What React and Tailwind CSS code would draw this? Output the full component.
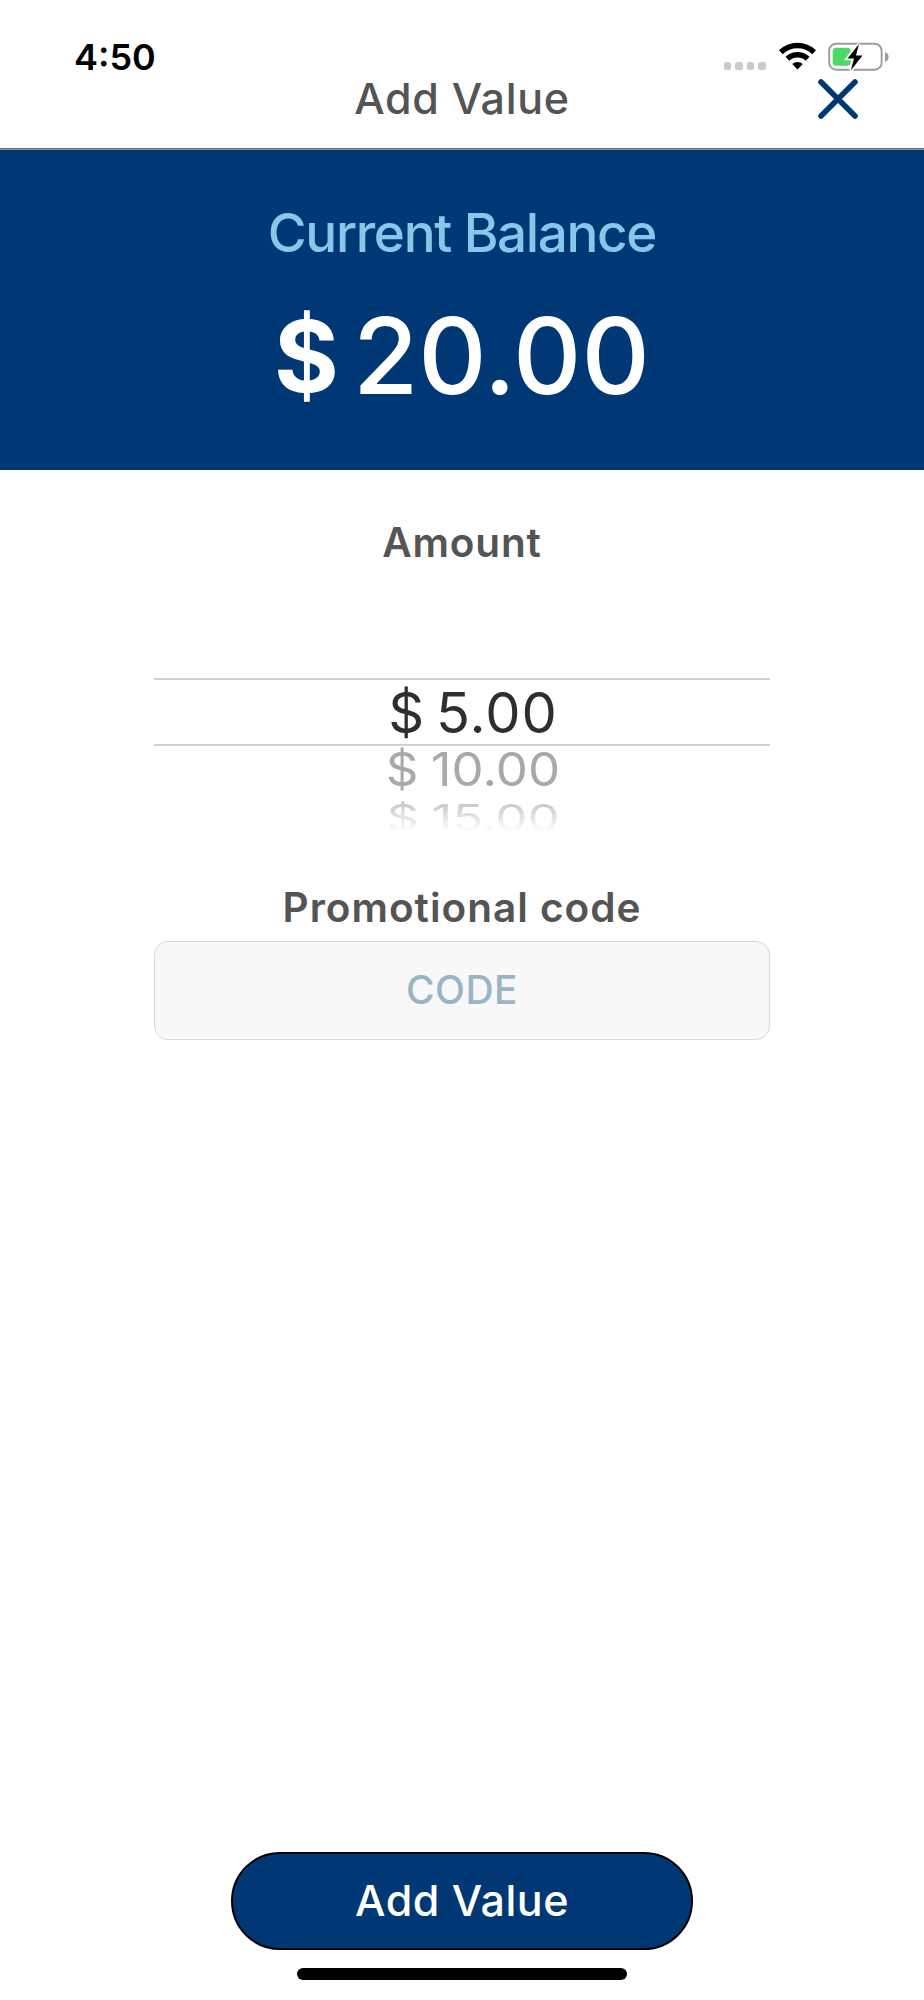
import React, { useState } from "react";

const WifiIcon = () => (
  <svg width="37" height="28" viewBox="0 0 37 28" fill="none" stroke="#000" strokeWidth="5.4">
    <path d="M1.9 10.2a23.8 23.8 0 0 1 33.2 0" />
    <path d="M8.4 16.8a14.5 14.5 0 0 1 20.2 0" />
    <path d="M18.5 27.4l-5.3-5.3a7.7 7.7 0 0 1 10.6 0z" fill="#000" stroke="none" />
  </svg>
);

const BatteryIcon = () => (
  <svg width="61" height="30" viewBox="0 0 61 30">
    <rect x="1.2" y="1.7" width="52.4" height="26" rx="7" fill="none" stroke="#9c9c9c" strokeWidth="1.9" />
    <path d="M57 10v10c2.4-.8 3.6-2.7 3.6-5s-1.2-4.2-3.6-5z" fill="#9c9c9c" />
    <rect x="4.7" y="5.7" width="18" height="18" rx="3.5" fill="#4cd964" />
    <path
      d="M31 2 19.500 16.500h6.500l-3.200 12L34.500 13.500h-6.500z"
      fill="#000"
      stroke="#fff"
      strokeWidth="3.6"
      paintOrder="stroke"
    />
  </svg>
);

const CloseIcon = () => (
  <svg width="40" height="40" viewBox="0 0 40 40" stroke="#003876" strokeWidth="5.6" strokeLinecap="round">
    <path d="M3 3l34 34M37 3L3 37" />
  </svg>
);

const StatusBar = () => (
  <div className="flex h-[77px] pl-[74px] pr-[35px] justify-between">
    <span className="mt-[39px] h-9 text-[36px] leading-9 font-semibold text-black">4:50</span>
    <div className="flex pt-[42px]">
      <div className="flex gap-[4px] mt-5 mr-[13px]">
        {[0, 1, 2, 3].map((dot) => (
          <span key={dot} className="w-[7.6px] h-2 rounded-[2.5px] bg-[#cbcbcb]" />
        ))}
      </div>
      <WifiIcon />
      <div className="ml-[12px]">
        <BatteryIcon />
      </div>
    </div>
  </div>
);

const AddValue = () => {
  const [code, setCode] = useState("");

  return (
    <div className="w-[924px] h-[2000px] bg-white flex flex-col overflow-hidden font-['Inter',sans-serif] text-[#545454]">
      <header className="h-[149px] shrink-0 border-b border-[#6a6a6c]">
        <StatusBar />
        <div className="grid grid-cols-[1fr_auto_1fr] items-center h-[43px] px-[66px]">
          <span />
          <h1 className="text-[43px] leading-[43px] font-[550] tracking-[0.7px]">Add Value</h1>
          <button className="justify-self-end" aria-label="Close">
            <CloseIcon />
          </button>
        </div>
      </header>

      <section className="h-[321px] shrink-0 border-t border-[#8f9499] bg-[#003876] flex flex-col items-center">
        <h2 className="mt-[53px] h-[60px] text-[53px] leading-[60px] font-medium tracking-[-1.35px] text-[#86c8ea]">Current Balance</h2>
        <div className="mt-[38px] h-[110px] flex text-white text-[106px] leading-[110px]">
          <span className="font-bold text-[99px]">$</span>
          <span className="ml-[14px] font-medium">20.00</span>
        </div>
      </section>

      <section className="flex flex-col items-center">
        <h3 className="mt-[53px] h-10 text-[40.5px] leading-10 font-semibold tracking-[0.85px]">Amount</h3>
        <div className="mt-[115px] w-[616px] flex flex-col items-center text-[56px] whitespace-pre">
          <div className="w-full h-[68px] border-y-2 border-[#d2d2d2] text-[#2e2e2e] leading-[66px] text-center pl-[22px] tracking-[1px] [word-spacing:-6px]">
            $ 5.00
          </div>
          <div className="h-[48px] pl-[22px] text-[#a9a9a9] text-[51px] leading-[48px] scale-y-[0.91] [word-spacing:-2px]">$ 10.00</div>
          <div className="h-[48px] pl-[22px] text-[51px] leading-[49px] scale-y-[0.71] [word-spacing:-2px] bg-linear-to-b from-[#cacaca] from-10% to-white to-90% bg-clip-text text-transparent">
            $ 15.00
          </div>
        </div>
      </section>

      <section className="mt-[46px] flex flex-col items-center">
        <label htmlFor="promo" className="h-10 text-[40.5px] leading-10 font-semibold tracking-[1px]">Promotional code</label>
        <input
          id="promo"
          value={code}
          onChange={(e) => setCode(e.target.value)}
          placeholder="CODE"
          className="mt-[13px] w-[616px] h-[99px] pb-[2px] rounded-[14px] border border-[#d8d8d8] bg-[#f8f8f8] text-center text-[39px] font-[450] tracking-[0.4px] placeholder:text-[#98b4c5] outline-none"
        />
      </section>

      <footer className="mt-auto mb-5 flex flex-col items-center">
        <button className="w-[462px] h-[98px] pb-[2px] rounded-full border-2 border-black bg-[#003876] text-white text-[43px] leading-[43px] font-medium tracking-[0.5px]">
          Add Value
        </button>
        <div className="mt-[18px] w-[330px] h-[12px] rounded-full bg-black" />
      </footer>
    </div>
  );
};

export default function App() {
  return <AddValue />;
}
